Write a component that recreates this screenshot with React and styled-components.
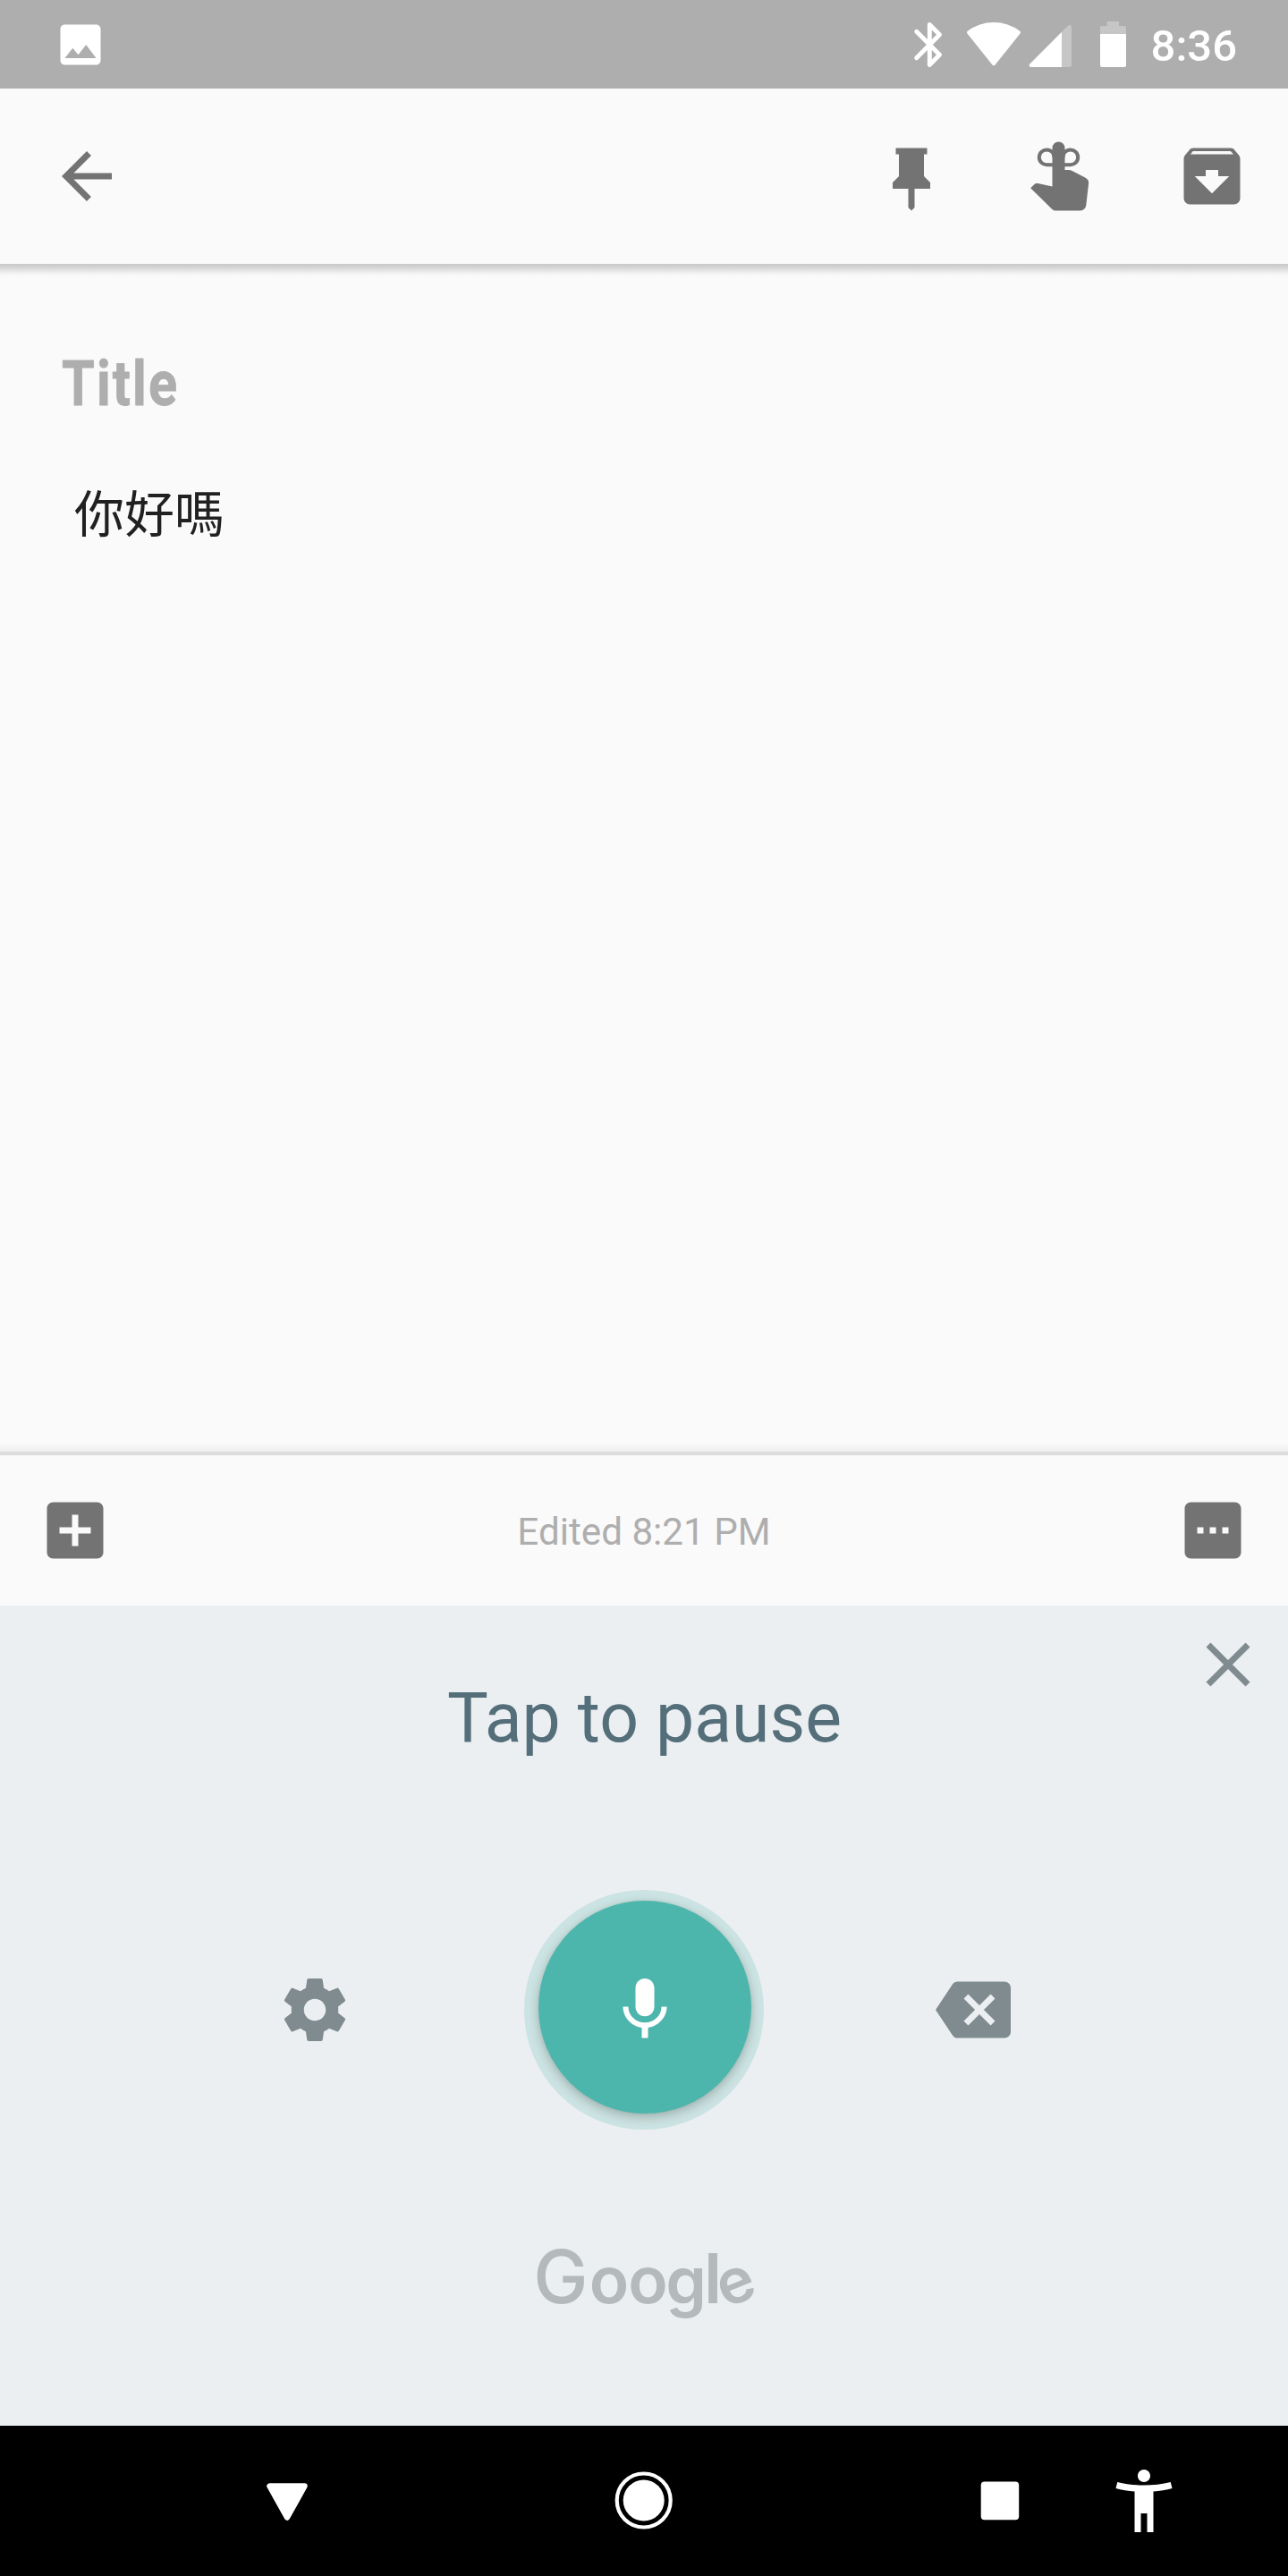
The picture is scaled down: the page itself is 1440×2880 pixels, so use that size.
import React from "react";
import styled, { createGlobalStyle } from "styled-components";

const GlobalStyle = createGlobalStyle`
  *, *::before, *::after { box-sizing: border-box; }
  body { margin: 0; background: #fafafa; }
`;

const Screen = styled.div`
  width: 1440px;
  height: 2880px;
  display: flex;
  flex-direction: column;
  overflow: hidden;
  background: #fafafa;
  font-family: Roboto, "Noto Sans CJK TC", sans-serif;
`;

const StatusBar = styled.header`
  height: 99px;
  flex: none;
  display: flex;
  align-items: center;
  justify-content: space-between;
  padding: 0 57px 0 60px;
  background: #aeaeae;
  color: #fff;
`;

const StatusGroup = styled.div`
  display: flex;
  align-items: center;
  height: 99px;
`;

const Clock = styled.time`
  margin-left: 27px;
  font-size: 49px;
  font-weight: 500;
  line-height: 58px;
  padding-top: 5px;
`;

const Icon = styled.svg`
  display: block;
  flex: none;
  width: ${(p) => p.$w || 84}px;
  height: ${(p) => p.$h || p.$w || 84}px;
  fill: currentColor;
`;

const IconButton = styled.button`
  display: block;
  flex: none;
  padding: 0;
  border: 0;
  background: none;
  color: inherit;
  margin-left: ${(p) => p.$gap || 0}px;
`;

const AppBar = styled.nav`
  height: 196px;
  flex: none;
  display: flex;
  align-items: center;
  justify-content: space-between;
  padding: 0 43px 0 55px;
  color: #737373;
`;

const Actions = styled.div`
  display: flex;
  gap: 84px;
`;

const TopShadow = styled.div`
  height: 14px;
  flex: none;
  background: linear-gradient(#c6c7c6, #dcdcdc 40%, #f2f2f2 75%, #fafafa);
`;

const Note = styled.main`
  flex: 1;
  padding: 79px 69px 0;
`;

const NoteTitle = styled.h1`
  margin: 0;
  font-size: 70px;
  line-height: 82px;
  font-weight: 700;
  color: #aeaeae;
  letter-spacing: 2.5px;
  -webkit-text-stroke: 0.8px #aeaeae;
  transform: scaleX(0.85);
  transform-origin: 0 50%;
`;

const NoteBody = styled.p`
  margin: 60px 0 0;
  padding-left: 14px;
  font-family: "Noto Sans CJK TC", sans-serif;
  font-size: 56px;
  line-height: 82px;
  color: #212121;
`;

const BottomShadow = styled.div`
  height: 14px;
  flex: none;
  border-bottom: 4px solid #dcdcdc;
  background: linear-gradient(#fafafa, #eeeeee);
`;

const EditBar = styled.footer`
  height: 168px;
  flex: none;
  display: flex;
  align-items: center;
  justify-content: space-between;
  padding: 0 42px;
  color: #737373;
`;

const Edited = styled.span`
  font-size: 42.2px;
  line-height: 50px;
  color: #aeaeae;
  padding-top: 4px;
`;

const VoicePanel = styled.section`
  height: 917px;
  flex: none;
  display: flex;
  flex-direction: column;
  background: #ebeff2;
  color: #808b8f;
`;

const PanelTop = styled.div`
  display: flex;
  justify-content: flex-end;
  height: 72px;
  padding: 24px 25px 0 0;
`;

const Prompt = styled.div`
  height: 110px;
  padding-left: 1px;
  text-align: center;
  font-size: 76.9px;
  line-height: 108px;
  color: #546e7a;
`;

const Controls = styled.div`
  margin-top: 136px;
  height: 268px;
  display: flex;
  align-items: center;
  justify-content: space-between;
  padding: 0 310px;
`;

const MicHalo = styled.div`
  width: 268px;
  height: 268px;
  border-radius: 50%;
  background: #cbe3e2;
  padding: 12px 14.5px 18px 15.5px;
`;

const MicButton = styled.button`
  width: 238px;
  height: 238px;
  display: flex;
  align-items: center;
  justify-content: center;
  padding: 6px 0 0;
  border: 0;
  border-radius: 50%;
  background: #4db6ac;
  color: #fff;
  box-shadow: 0 4px 12px rgba(0, 0, 0, 0.22), 0 0 4px rgba(0, 0, 0, 0.05);
`;

const Wordmark = styled.svg`
  display: block;
  overflow: visible;
  width: 300px;
  height: 150px;
  margin: 99px 0 0 570px;
  fill: #b4b9bc;
  font-family: Inter, sans-serif;
  font-weight: 600;
  font-size: 73px;
  text-anchor: middle;
`;

const NavBar = styled.nav`
  height: 168px;
  flex: none;
  display: flex;
  align-items: center;
  padding-left: 279px;
  background: #000;
  color: #fff;
`;

const M = ({ d, size = 84, children }) => (
  <Icon viewBox="0 0 24 24" $w={size}>
    {d && <path d={d} />}
    {children}
  </Icon>
);

const paths = {
  image:
    "M21 19V5c0-1.1-.9-2-2-2H5c-1.1 0-2 .9-2 2v14c0 1.1.9 2 2 2h14c1.1 0 2-.9 2-2zM8.5 13.5l2.5 3.01L14.5 12l4.5 6H5l3.5-4.5z",
  back: "M20 11H7.83l5.59-5.59L12 4l-8 8 8 8 1.41-1.41L7.83 13H20v-2z",
  pin: "M7 3h10v2h-1v7l2 2v2h-5v6l-1 1-1-1v-6H6v-2l2-2V5H7z",
  hand:
    "M9 3a2 2 0 0 1 4 0v7h1.2c.4 0 .7.1 1 .2l4.4 2.3c.7.4 1.1 1 1 1.8l-.8 7c-.2 1-.9 1.7-1.9 1.7h-7.7c-.6 0-1-.2-1.4-.6L2.05 15.8l1.1-1.1c.3-.3.7-.45 1.2-.4L9 15.3z",
  archive:
    "M20.54 5.23l-1.39-1.68C18.88 3.21 18.47 3 18 3H6c-.47 0-.88.21-1.16.55L3.46 5.23C3.17 5.57 3 6.02 3 6.5V19c0 1.1.9 2 2 2h14c1.1 0 2-.9 2-2V6.5c0-.48-.17-.93-.46-1.27zM12 17.5L6.5 12H10v-2h4v2h3.5L12 17.5zM5.12 5l.81-1h12l.94 1H5.12z",
  add: "M19 3H5c-1.1 0-2 .9-2 2v14c0 1.1.9 2 2 2h14c1.1 0 2-.9 2-2V5c0-1.1-.9-2-2-2zm-2 10h-4v4h-2v-4H7v-2h4V7h2v4h4v2z",
  more: "M19 3H5c-1.1 0-2 .9-2 2v14c0 1.1.9 2 2 2h14c1.1 0 2-.9 2-2V5c0-1.1-.9-2-2-2zM9 13H7v-2h2v2zm4 0h-2v-2h2v2zm4 0h-2v-2h2v2z",
  close:
    "M19 6.41L17.59 5 12 10.59 6.41 5 5 6.41 10.59 12 5 17.59 6.41 19 12 13.41 17.59 19 19 17.59 13.41 12z",
  settings:
    "M19.43 12.98c.04-.32.07-.64.07-.98s-.03-.66-.07-.98l2.11-1.65c.19-.15.24-.42.12-.64l-2-3.46c-.12-.22-.39-.3-.61-.22l-2.49 1c-.52-.4-1.08-.73-1.69-.98l-.38-2.65C14.46 2.18 14.25 2 14 2h-4c-.25 0-.46.18-.49.42l-.38 2.65c-.61.25-1.17.59-1.69.98l-2.49-1c-.23-.09-.49 0-.61.22l-2 3.46c-.13.22-.07.49.12.64l2.11 1.65c-.04.32-.07.65-.07.98s.03.66.07.98l-2.11 1.65c-.19.15-.24.42-.12.64l2 3.46c.12.22.39.3.61.22l2.49-1c.52.4 1.08.73 1.69.98l.38 2.65c.03.24.24.42.49.42h4c.25 0 .46-.18.49-.42l.38-2.65c.61-.25 1.17-.59 1.69-.98l2.49 1c.23.09.49 0 .61-.22l2-3.46c.12-.22.07-.49-.12-.64l-2.11-1.65zM12 15.5c-1.93 0-3.5-1.57-3.5-3.5s1.57-3.5 3.5-3.5 3.5 1.57 3.5 3.5-1.57 3.5-3.5 3.5z",
  mic: "M12 14.1c1.66 0 3-1.34 3-3V5c0-1.66-1.34-3-3-3S9 3.34 9 5v6.1c0 1.66 1.34 3 3 3zM17.3 11c0 3-2.54 5.1-5.3 5.1S6.7 14 6.7 11H5c0 3.41 2.72 6.23 6 6.72V21h2v-3.28c3.28-.48 6-3.3 6-6.72h-1.7z",
  backspace:
    "M22 3H7c-.69 0-1.23.35-1.59.88L0 12l5.41 8.11c.36.53.9.89 1.59.89h15c1.1 0 2-.9 2-2V5c0-1.1-.9-2-2-2zm-3 12.59L17.59 17 14 13.41 10.41 17 9 15.59 12.59 12 9 8.41 10.41 7 14 10.59 17.59 7 19 8.41 15.41 12 19 15.59z",
  person:
    "M20.5 6c-2.61.7-5.67 1-8.5 1s-5.89-.3-8.5-1L3 8c1.86.5 4 .83 6 1v13h2v-6h2v6h2V9c2-.17 4.14-.5 6-1l-.5-2zM12 6c1.1 0 2-.9 2-2s-.9-2-2-2-2 .9-2 2 .9 2 2 2z",
};

/* Bluetooth, wifi, signal and battery share one strip of glyphs. */
const SystemIcons = () => (
  <Icon viewBox="1020 20 240 60" $w={240} $h={60}>
    <path
      d="M1024.7 35.3l25.8 25.9-11.2 11.3v-45l11.2 11.3-25.8 25.9"
      fill="none"
      stroke="currentColor"
      strokeWidth="4.9"
      strokeLinecap="round"
      strokeLinejoin="round"
    />
    <path
      d="M1083 36.3a46.5 46.5 0 0 1 56 0L1111 71.2z"
      stroke="currentColor"
      strokeWidth="4"
      strokeLinejoin="round"
    />
    <path d="M1187 35.8l7.3-7.2c1.4-1.3 3.7-.5 3.7 1.6V73a2 2 0 0 1-2 2h-9z" fill="#c6c6c6" />
    <path d="M1187 35.8V75h-34.2c-1.9 0-2.7-2.2-1.4-3.5z" />
    <path d="M1230 38v-7a2 2 0 0 1 2-2h5.7v-5h13.3v5h6a2 2 0 0 1 2 2v7z" fill="#c6c6c6" />
    <path d="M1230 38h29v35a2 2 0 0 1-2 2h-25a2 2 0 0 1-2-2z" />
  </Icon>
);

export default function App() {
  return (
    <>
      <GlobalStyle />
      <Screen>
        <StatusBar>
          <M d={paths.image} size={60} />
          <StatusGroup>
            <SystemIcons />
            <Clock>8:36</Clock>
          </StatusGroup>
        </StatusBar>

        <AppBar>
          <IconButton aria-label="Back">
            <M d={paths.back} />
          </IconButton>
          <Actions>
            <IconButton aria-label="Pin">
              <M d={paths.pin} />
            </IconButton>
            <IconButton aria-label="Remind me">
              <M d={paths.hand}>
                <path
                  d="M9.6 8.35H7.25A2.4 2.4 0 1 1 9.6 6M12.4 8.35h2.35A2.4 2.4 0 1 0 12.4 6"
                  fill="none"
                  stroke="currentColor"
                  strokeWidth="1.15"
                />
              </M>
            </IconButton>
            <IconButton aria-label="Archive">
              <M d={paths.archive} />
            </IconButton>
          </Actions>
        </AppBar>
        <TopShadow />

        <Note>
          <NoteTitle>Title</NoteTitle>
          <NoteBody lang="zh-Hant">你好嗎</NoteBody>
        </Note>

        <BottomShadow />
        <EditBar>
          <IconButton aria-label="Add">
            <M d={paths.add} />
          </IconButton>
          <Edited>Edited 8:21 PM</Edited>
          <IconButton aria-label="More">
            <M d={paths.more} />
          </IconButton>
        </EditBar>

        <VoicePanel>
          <PanelTop>
            <IconButton aria-label="Close">
              <M d={paths.close} />
            </IconButton>
          </PanelTop>
          <Prompt>Tap to pause</Prompt>
          <Controls>
            <IconButton aria-label="Settings">
              <M d={paths.settings} />
            </IconButton>
            <MicHalo>
              <MicButton aria-label="Pause">
                <M d={paths.mic} />
              </MicButton>
            </MicHalo>
            <IconButton aria-label="Delete">
              <M d={paths.backspace} />
            </IconButton>
          </Controls>
          <Wordmark viewBox="570 2480 300 150">
            <text y="2575">
              <tspan x="627" fontSize="82" fontWeight="500">G</tspan>
              <tspan x="681">o</tspan>
              <tspan x="724.5">o</tspan>
              <tspan x="767" y="2576">g</tspan>
              <tspan x="797" y="2575" fontSize="77">l</tspan>
              <tspan x="811" y="2581" fontSize="70" textAnchor="start" rotate="-22">e</tspan>
            </text>
          </Wordmark>
        </VoicePanel>

        <NavBar>
          <IconButton aria-label="Back">
            <Icon viewBox="0 0 84 84">
              <path
                d="M22.5 25.5h39L42 60.5z"
                stroke="currentColor"
                strokeWidth="6.5"
                strokeLinejoin="round"
              />
            </Icon>
          </IconButton>
          <IconButton aria-label="Home" $gap={315}>
            <Icon viewBox="0 0 84 84">
              <circle cx="41.7" cy="41.5" r="23" />
              <circle cx="41.7" cy="41.5" r="30" fill="none" stroke="currentColor" strokeWidth="4.2" />
            </Icon>
          </IconButton>
          <IconButton aria-label="Recent apps" $gap={314}>
            <Icon viewBox="0 0 84 84">
              <rect x="20.7" y="20.5" width="42.5" height="42.8" rx="4" />
            </Icon>
          </IconButton>
          <IconButton aria-label="Accessibility" $gap={77}>
            <M d={paths.person} />
          </IconButton>
        </NavBar>
      </Screen>
    </>
  );
}
